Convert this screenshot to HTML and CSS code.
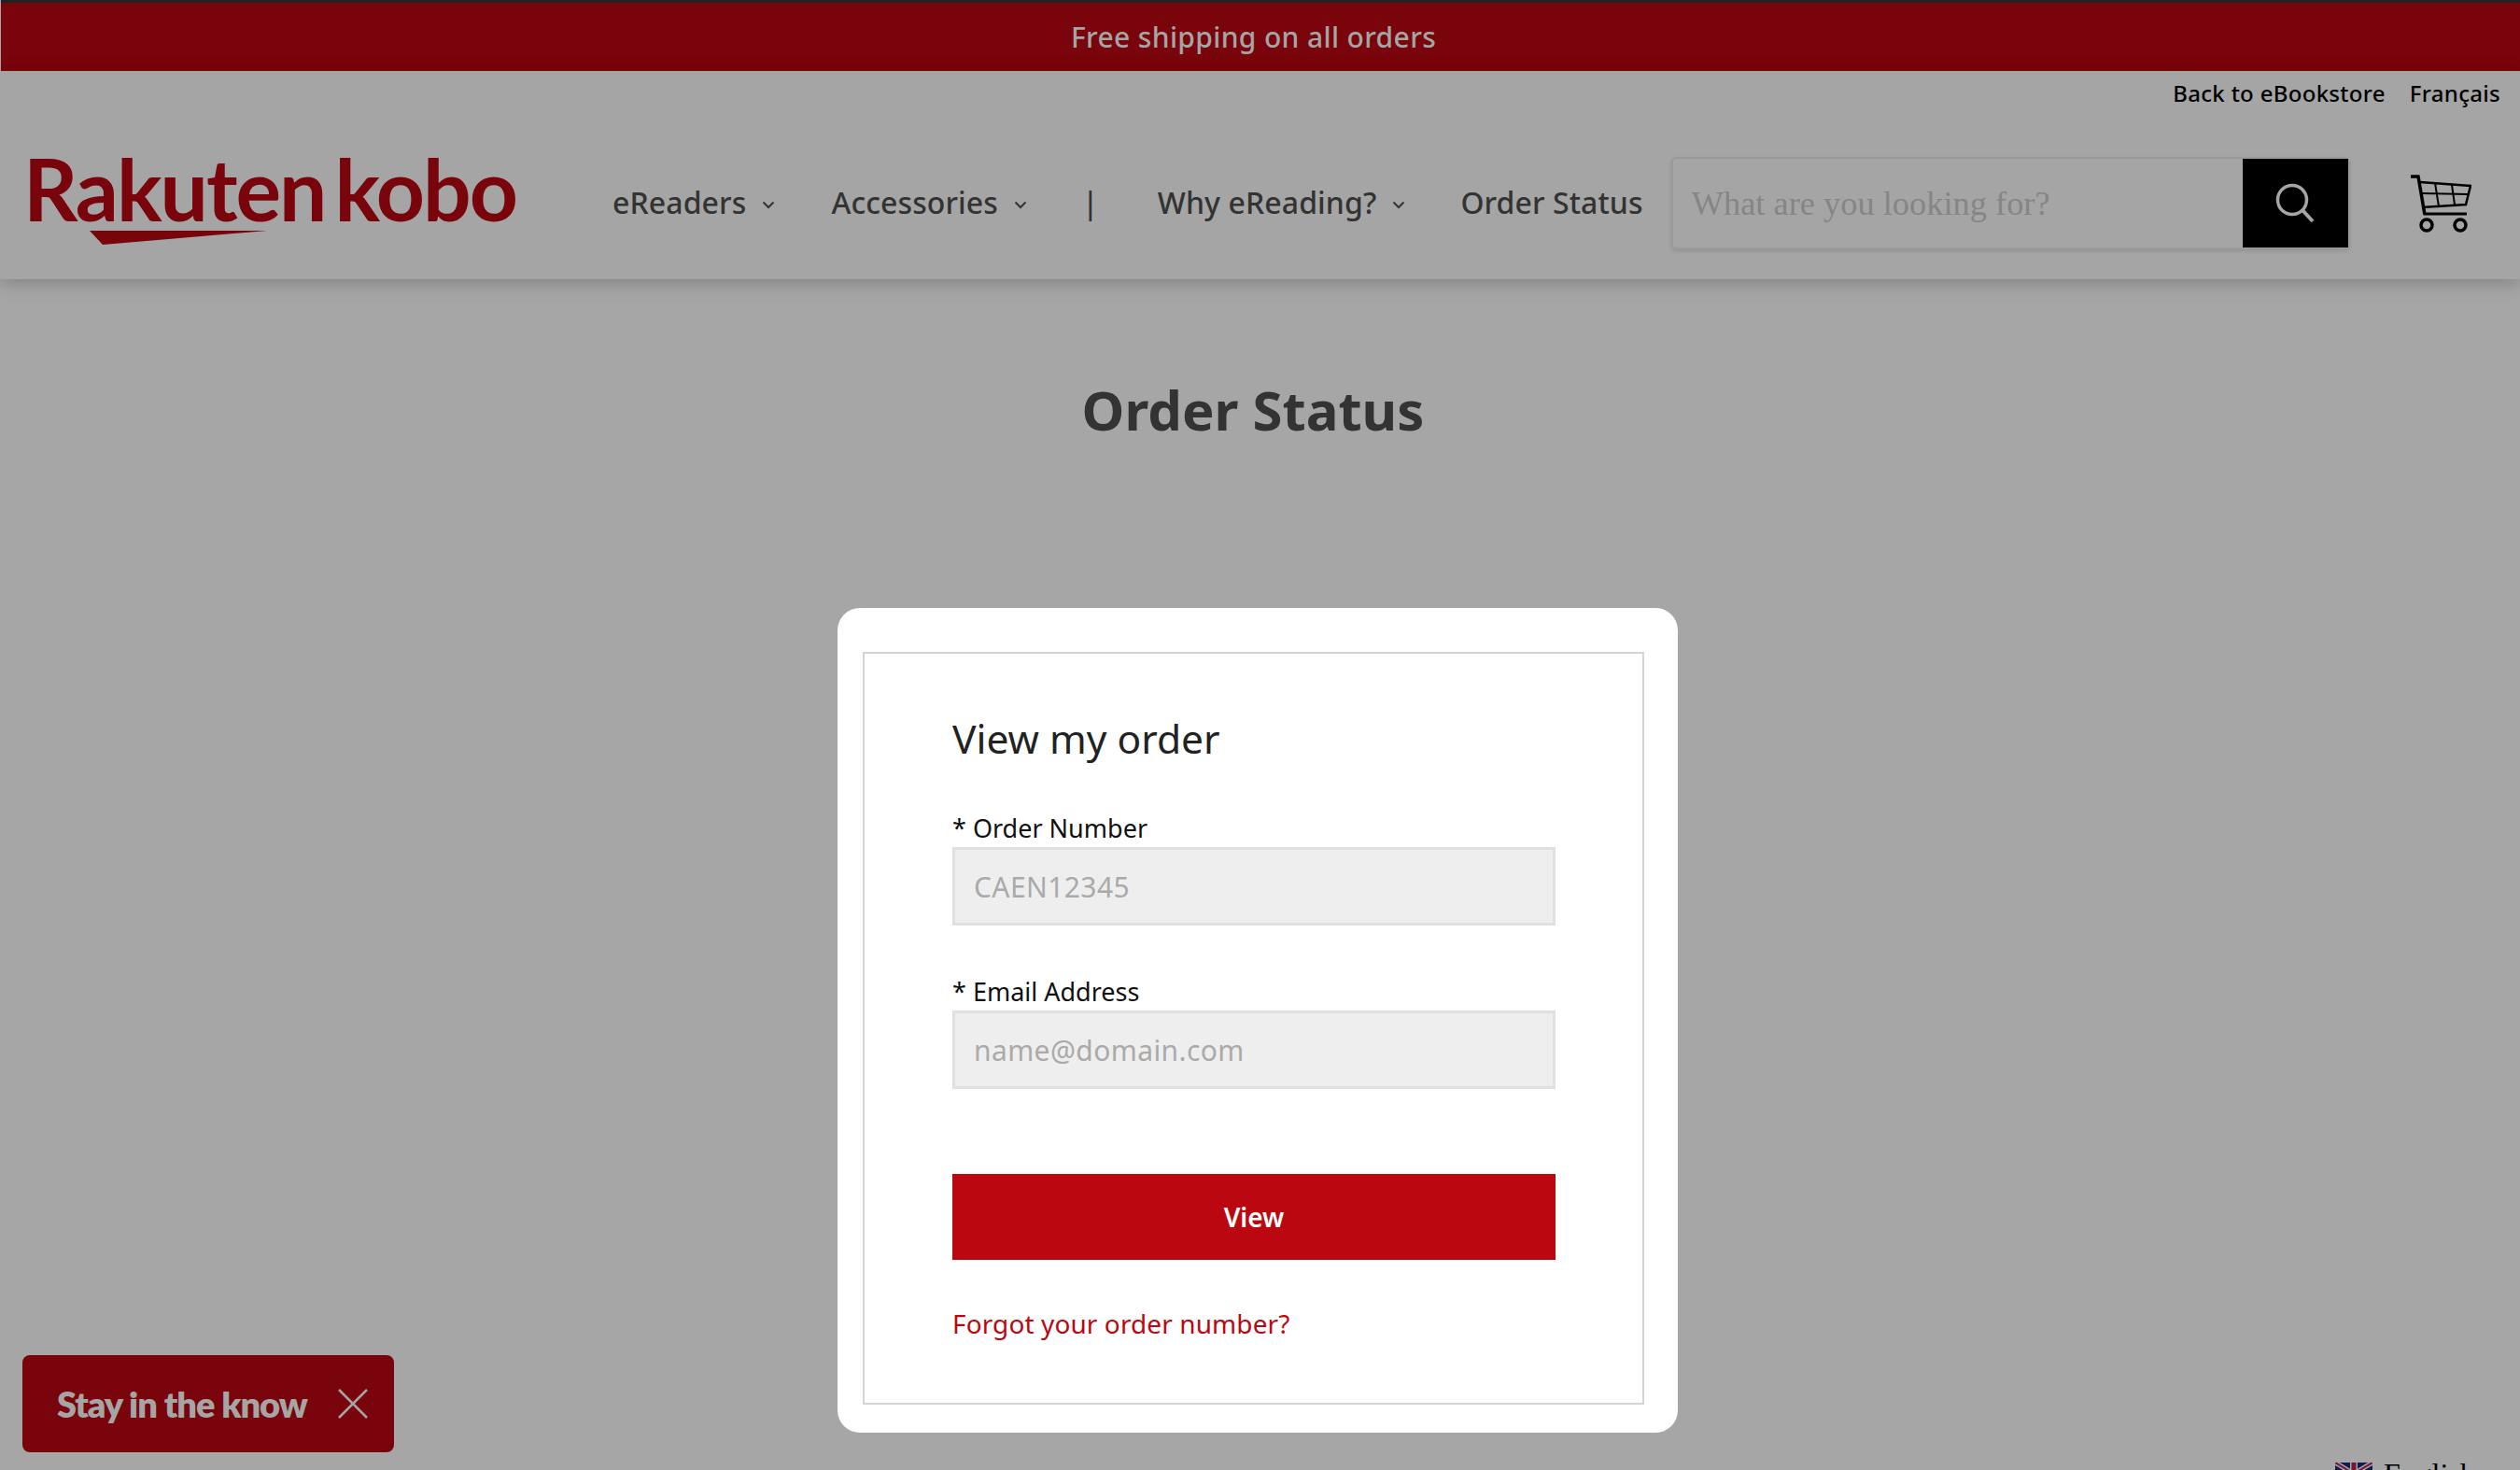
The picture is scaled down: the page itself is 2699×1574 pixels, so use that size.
FILE: index.html
```html
<!DOCTYPE html>
<html lang="en">
<head>
    <meta charset="UTF-8">
    <meta name="viewport" content="width=device-width, initial-scale=1.0">
    <title>Order Status</title>
    <link rel="stylesheet" href="styles.css">
</head>
<body>
    <!-- promo bar -->
    <div class="promo-bar">Free shipping on all orders</div>

    <header class="site-header">
        <div class="util-links">
            <a href="#">Back to eBookstore</a>
            <a href="#">Français</a>
        </div>
        <div class="header-main">
            <a href="#" class="logo">
                <span class="logo-text">Rakuten kobo</span>
                <svg class="logo-swoosh" width="190" height="15" viewBox="0 0 190 15"><polygon points="0,0 190,0 14,15" fill="#7a040b"/></svg>
            </a>
            <nav class="main-nav">
                <a href="#" class="nav-item nav-ereaders">eReaders
                    <svg class="chevron" width="14" height="9" viewBox="0 0 14 9"><path d="M1.5 1.5 7 7l5.5-5.5" fill="none" stroke="#333" stroke-width="2"/></svg>
                </a>
                <a href="#" class="nav-item nav-accessories">Accessories
                    <svg class="chevron" width="14" height="9" viewBox="0 0 14 9"><path d="M1.5 1.5 7 7l5.5-5.5" fill="none" stroke="#333" stroke-width="2"/></svg>
                </a>
                <span class="nav-item nav-sep">|</span>
                <a href="#" class="nav-item nav-why">Why eReading?
                    <svg class="chevron" width="14" height="9" viewBox="0 0 14 9"><path d="M1.5 1.5 7 7l5.5-5.5" fill="none" stroke="#333" stroke-width="2"/></svg>
                </a>
                <a href="#" class="nav-item">Order Status</a>
            </nav>
            <form class="search-box">
                <input class="search-input" type="text" placeholder="What are you looking for?">
                <button class="search-button" type="button" aria-label="Search">
                    <svg width="46" height="46" viewBox="0 0 46 46"><circle cx="20" cy="19" r="15.5" fill="none" stroke="#a5a5a5" stroke-width="3.5"/><path d="M31 30l11 12" stroke="#a5a5a5" stroke-width="4" fill="none"/></svg>
                </button>
            </form>
            <a href="#" class="cart" aria-label="Cart">
                <svg width="66" height="64" viewBox="0 0 66 64">
                    <path d="M1 3h8l7 41" fill="none" stroke="#000" stroke-width="3.5"/>
                    <path d="M11 9l54 4-5 20-47 3" fill="none" stroke="#000" stroke-width="2.5"/>
                    <path d="M13 21l49 1M27 10l4 25M45 12l3 21" fill="none" stroke="#000" stroke-width="2"/>
                    <path d="M15 43h46" fill="none" stroke="#000" stroke-width="3"/>
                    <circle cx="18" cy="55" r="6" fill="none" stroke="#000" stroke-width="3.5"/>
                    <circle cx="54" cy="55" r="6" fill="none" stroke="#000" stroke-width="3.5"/>
                </svg>
            </a>
        </div>
    </header>

    <main class="page">
        <h1 class="page-title">Order Status</h1>
        <div class="modal-card">
            <form class="order-form">
                <h2 class="form-title">View my order</h2>
                <label class="field-label" for="orderNumber">* Order Number</label>
                <input class="field-input" id="orderNumber" type="text" placeholder="CAEN12345">
                <label class="field-label field-label-second" for="orderEmail">* Email Address</label>
                <input class="field-input" id="orderEmail" type="text" placeholder="name@domain.com">
                <button class="view-button" type="button">View</button>
                <a href="#" class="forgot-link">Forgot your order number?</a>
            </form>
        </div>
    </main>

    <!-- floating widgets -->
    <div class="stay-tab">
        <span class="stay-text">Stay in the know</span>
        <svg width="32" height="32" viewBox="0 0 32 32"><path d="M1 1l30 30M31 1 1 31" stroke="#a5a5a5" stroke-width="2.5" fill="none"/></svg>
    </div>
    <div class="lang-widget">
        <svg width="40" height="24" viewBox="0 0 40 24">
            <rect width="40" height="24" fill="#0b1d54"/>
            <path d="M0 0l40 24M40 0 0 24" stroke="#a5a5a5" stroke-width="5"/>
            <path d="M0 0l40 24M40 0 0 24" stroke="#7a1530" stroke-width="2"/>
            <path d="M20 0v24M0 12h40" stroke="#a5a5a5" stroke-width="8"/>
            <path d="M20 0v24M0 12h40" stroke="#7a1530" stroke-width="5"/>
        </svg>
        <span>English</span>
    </div>
</body>
</html>
```

FILE: styles.css
```css
* {
    box-sizing: border-box;
}
html, body {
    height: 100%;
}
body {
    position: relative;
    margin: 0;
    height: 1574px;
    overflow: hidden;
    background-color: #a6a6a6;
    font-family: "Noto Sans", Arial, sans-serif;
    color: #333;
}
a {
    color: inherit;
    text-decoration: none;
}

.promo-bar {
    height: 76px;
    margin-left: 1px;
    padding-right: 15px;
    border-top: 3px solid #222;
    background-color: #7a040b;
    color: #a5a5a5;
    font-size: 30px;
    font-weight: 500;
    line-height: 73px;
    letter-spacing: 0.35px;
    text-align: center;
}

.site-header {
    height: 223px;
    background-color: #a5a5a5;
    box-shadow: 0 4px 18px rgba(0, 0, 0, 0.22);
}
.util-links {
    display: flex;
    justify-content: flex-end;
    gap: 26px;
    height: 48px;
    padding-right: 21px;
    color: #000;
    font-size: 24px;
    font-weight: 500;
    line-height: 48px;
    letter-spacing: 0.3px;
}
.header-main {
    display: flex;
    align-items: center;
    height: 175px;
    padding: 12px 0 0 32px;
}

.logo {
    display: block;
    width: 520px;
    margin-top: -10px;
    color: #7a040b;
}
.logo-text {
    display: block;
    margin-left: -7px;
    font-family: "Lato", sans-serif;
    font-size: 91px;
    font-weight: 700;
    line-height: 78px;
    letter-spacing: -2px;
    word-spacing: -10px;
    white-space: nowrap;
}
.logo-swoosh {
    display: block;
    margin: 6px 0 0 64px;
}

.main-nav {
    display: flex;
    align-items: center;
    margin-left: 104px;
    margin-top: -2px;
    font-size: 32px;
    font-weight: 500;
    letter-spacing: 0.1px;
    white-space: nowrap;
}
.nav-item {
    display: flex;
    align-items: center;
}
.chevron {
    margin: 6px 0 0 17px;
}
.nav-ereaders {
    margin-right: 60px;
}
.nav-accessories {
    margin-right: 59px;
}
.nav-sep {
    margin-right: 63px;
}
.nav-why {
    margin-right: 59px;
}

.search-box {
    display: flex;
    width: 727px;
    height: 99px;
    margin-left: 30px;
    border: 2px solid #9a9a9a;
    border-radius: 6px;
    box-shadow: 0 2px 4px rgba(0, 0, 0, 0.12);
}
.search-input {
    flex: 1;
    min-width: 0;
    padding: 0 0 0 20px;
    border: 0;
    background: transparent;
    font-family: "Liberation Serif", serif;
    font-size: 36.4px;
}
.search-input::placeholder {
    color: #858585;
}
.search-button {
    display: flex;
    align-items: center;
    justify-content: center;
    width: 113px;
    border: 0;
    background-color: #000;
}
.cart {
    display: block;
    margin: 0 0 0 64px;
}
.cart svg {
    display: block;
}

.page-title {
    margin: 106px 0 0;
    padding-right: 15px;
    color: #333;
    font-size: 58px;
    font-weight: 700;
    line-height: 68px;
    text-align: center;
}
.modal-card {
    width: 900px;
    height: 883px;
    margin: 178px 0 0 897px;
    padding: 47px 36px 30px 27px;
    border-radius: 24px;
    background-color: #fff;
}
.order-form {
    display: flex;
    flex-direction: column;
    align-items: flex-start;
    height: 806px;
    padding: 0 93px 0 94px;
    border: 2px solid #d4d4d4;
}
.form-title {
    margin: 61px 0 0;
    color: #222;
    font-size: 42.5px;
    font-weight: 400;
    line-height: 60px;
}
.field-label {
    margin-top: 46px;
    color: #111;
    font-size: 27px;
    line-height: 40px;
}
.field-label-second {
    margin-top: 51px;
}
.field-input {
    width: 646px;
    height: 84px;
    padding: 0 20px;
    border: 3px solid #e0e0e0;
    background-color: #eee;
    font-family: inherit;
    font-size: 30px;
    letter-spacing: 0.4px;
}
.field-input::placeholder {
    color: #aaa;
}
.view-button {
    width: 646px;
    height: 92px;
    margin-top: 91px;
    border: 0;
    background-color: #bb0710;
    color: #fff;
    font-family: inherit;
    font-size: 28px;
    font-weight: 600;
}
.forgot-link {
    margin-top: 48px;
    color: #bb0710;
    font-size: 28px;
    line-height: 40px;
    letter-spacing: 0.1px;
}

.stay-tab {
    position: absolute;
    left: 24px;
    top: 1451px;
    display: flex;
    align-items: center;
    gap: 33px;
    width: 398px;
    height: 104px;
    padding-left: 37px;
    border-radius: 8px;
    background-color: #7a040b;
    color: #a5a5a5;
}
.stay-text {
    font-family: "Lato", sans-serif;
    font-size: 38px;
    font-weight: 800;
    letter-spacing: -1px;
    white-space: nowrap;
}
.lang-widget {
    position: absolute;
    left: 2501px;
    top: 1566px;
    display: flex;
    gap: 12px;
    color: #000;
    font-family: "Liberation Serif", serif;
    font-size: 32px;
    line-height: 24px;
}
.lang-widget svg {
    flex: none;
}
```
